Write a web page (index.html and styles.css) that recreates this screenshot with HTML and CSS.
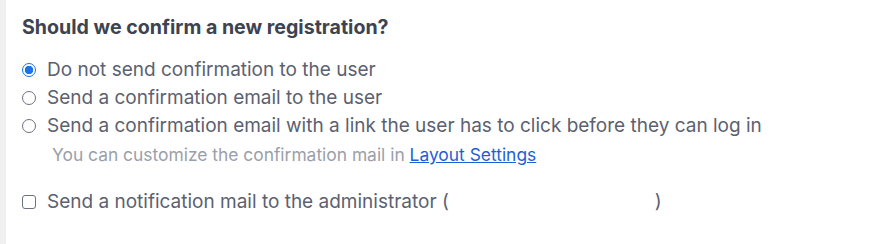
FILE: index.html
```html
<!DOCTYPE html>
<html>
<head>
<meta charset="utf-8">
<link rel="stylesheet" href="styles.css">
</head>
<body>
<div class="page">
  <div class="strip"></div>
  <div class="panel">
    <h2 class="title">Should we confirm a new registration?</h2>
    <div class="options">
      <label class="opt"><span class="radio checked"></span>Do not send confirmation to the user</label>
      <label class="opt"><span class="radio"></span>Send a confirmation email to the user</label>
      <label class="opt"><span class="radio"></span>Send a confirmation email with a link the user has to click before they can log in</label>
      <p class="hint">You can customize the confirmation mail in <a href="#" class="link">Layout Settings</a></p>
    </div>
    <label class="opt notify"><span class="check"></span>Send a notification mail to the administrator (<span class="email"></span>)</label>
  </div>
</div>
</body>
</html>
```
FILE: styles.css
```css
html, body { margin: 0; padding: 0; background: #fff; }
body { font-family: Inter, "Noto Sans", sans-serif; color: #5b6170; }
.page { display: flex; height: 244px; }
.strip { width: 6px; background: #f0f0f1; flex: none; }
.panel { padding: 14px 0 0 16px; flex: 1; }
.title { margin: 0; font-size: 19.6px; font-weight: 700; color: #3d4350; line-height: 26px; }
.options { margin-top: 16px; display: flex; flex-direction: column; }
.opt { display: flex; align-items: center; font-size: 19px; line-height: 28px; height: 28px; }
.radio { width: 12px; height: 12px; border: 1px solid #6d7280; border-radius: 50%; margin-right: 11px; flex: none; box-sizing: content-box; }
.radio.checked { border-color: #1a73e8; background: radial-gradient(circle, #1a73e8 0 4px, #fff 4.5px); }
.check { width: 12px; height: 12px; border: 1px solid #6d7280; border-radius: 3px; margin-right: 11px; flex: none; }
.hint { margin: 4px 0 0 30px; font-size: 17.4px; line-height: 22px; color: #9aa0aa; }
.link { color: #1f5fd6; text-decoration: underline; }
.notify { margin-top: 22px; }
.email { display: inline-block; width: 206px; }
```
